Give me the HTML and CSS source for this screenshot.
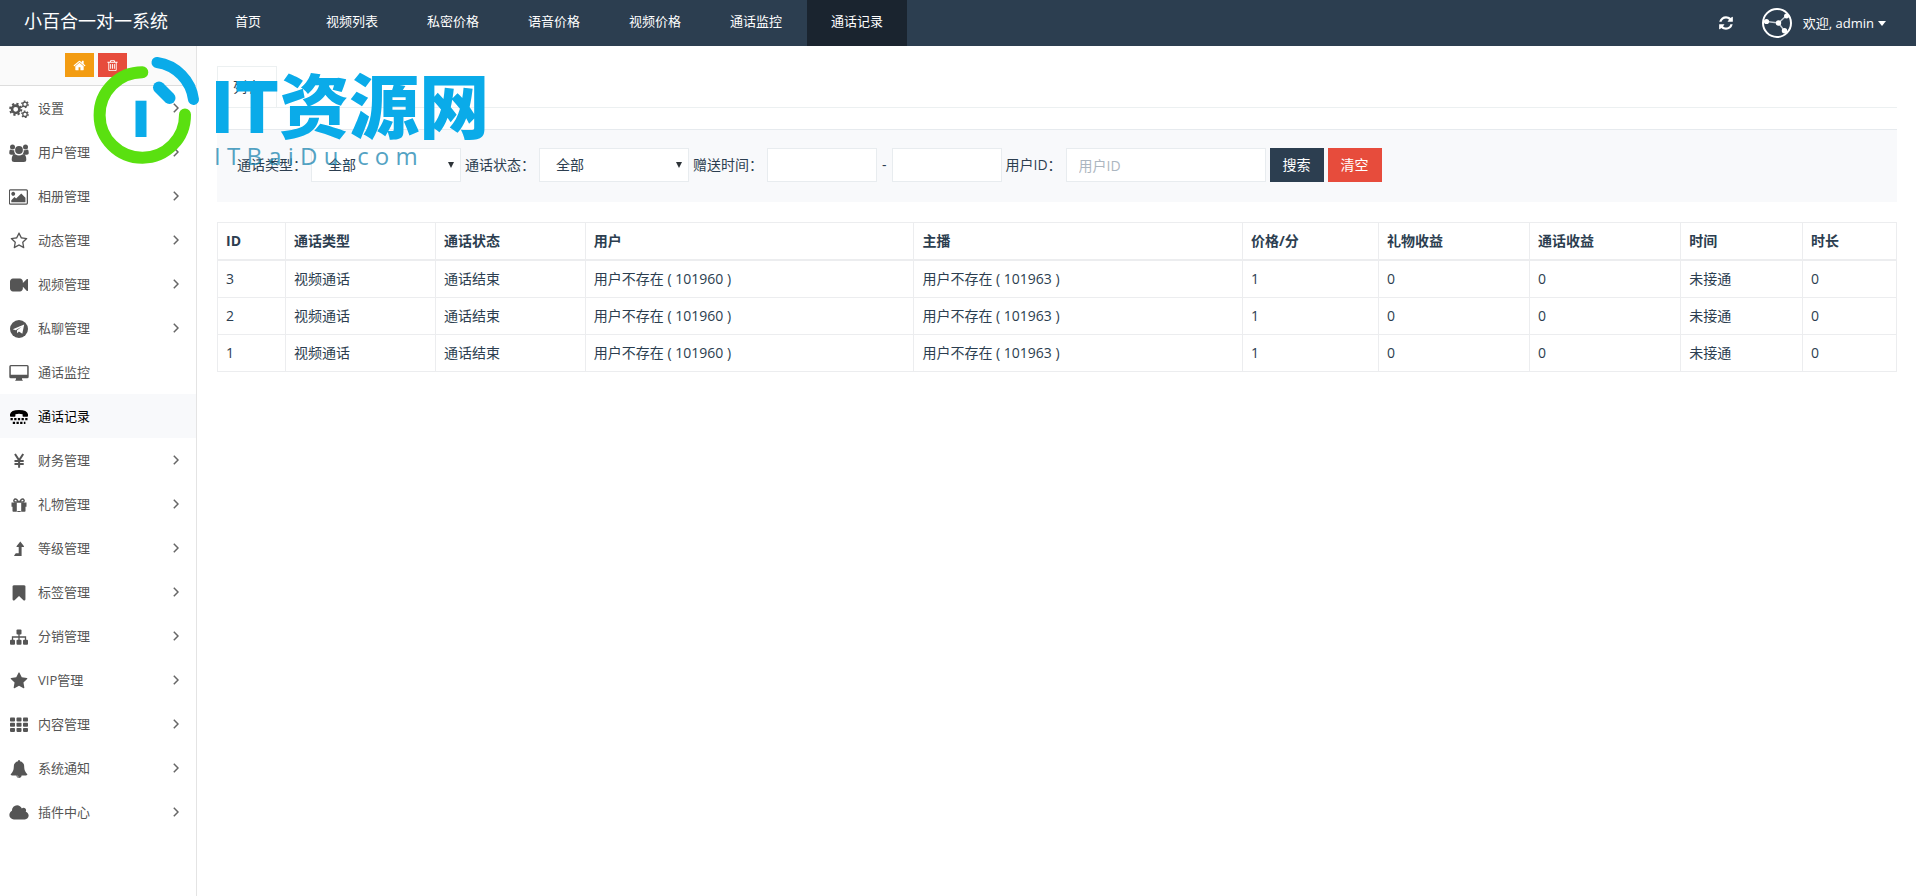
FILE: index.html
```html
<!DOCTYPE html>
<html lang="zh-CN">
<head>
<meta charset="utf-8">
<meta name="viewport" content="width=device-width, initial-scale=1">
<title>小百合一对一系统</title>
<link rel="stylesheet" href="styles.css">
</head>
<body>
<header class="topbar">
  <a class="brand" href="#">小百合一对一系统</a>
  <nav class="tabs">
    <a class="tab tab-home" href="#">首页</a>
    <a class="tab" href="#">视频列表</a>
    <a class="tab" href="#">私密价格</a>
    <a class="tab" href="#">语音价格</a>
    <a class="tab" href="#">视频价格</a>
    <a class="tab" href="#">通话监控</a>
    <a class="tab tab-active" href="#">通话记录</a>
  </nav>
  <div class="account">
    <button class="refresh" type="button" aria-label="刷新">
      <svg width="16" height="16" viewBox="0 0 1792 1792"><path d="M1639 1056q0 5-1 7-64 268-268 434.500t-478 166.500q-146 0-282.500-55t-243.500-157l-129 129q-19 19-45 19t-45-19-19-45v-448q0-26 19-45t45-19h448q26 0 45 19t19 45-19 45l-137 137q71 66 161 102t187 36q134 0 250-65t186-179q11-17 53-117 8-23 30-23h192q13 0 22.500 9.500t9.500 22.500zm25-800v448q0 26-19 45t-45 19h-448q-26 0-45-19t-19-45 19-45l138-138q-148-137-349-137-134 0-250 65t-186 179q-11 17-53 117-8 23-30 23h-199q-13 0-22.500-9.500t-9.500-22.500v-7q65-268 270-434.500t480-166.500q146 0 284 55.500t245 156.500l130-129q19-19 45-19t45 19 19 45z"/></svg>
    </button>
    <a class="user" href="#">
      <svg class="avatar" width="30" height="30" viewBox="0 0 30 30">
        <circle cx="15" cy="15" r="14" fill="none" stroke="#fff" stroke-width="2"/>
        <path d="M4.500 13.500 16.500 15 24.500 7.500M16.500 15l6 8" fill="none" stroke="#c3cbd3" stroke-width="1.500"/>
        <circle cx="4.500" cy="13.500" r="2.600"/><circle cx="16.500" cy="15" r="2.700"/><circle cx="24.500" cy="8" r="2.500"/><circle cx="22.500" cy="22.800" r="2.700"/>
      </svg>
      <span>欢迎, admin</span>
      <svg class="caret" width="8" height="5" viewBox="0 0 8 5"><path d="M0 0h8L4 5z"/></svg>
    </a>
  </div>
</header>

<div class="layout">
  <aside class="sidebar">
    <div class="shortcuts">
      <button class="shortcut shortcut-home" type="button" aria-label="首页">
        <svg width="13" height="13" viewBox="0 0 1792 1792"><path d="M1472 992v480q0 26-19 45t-45 19h-384v-384h-256v384h-384q-26 0-45-19t-19-45v-480q0-1 .5-3t.5-3l575-474 575 474q1 2 1 6zm223-69l-62 74q-8 9-21 11h-3q-13 0-21-7l-692-577-692 577q-12 8-24 7-13-2-21-11l-62-74q-8-10-7-23.500t11-21.500l719-599q32-26 76-26t76 26l244 204v-195q0-14 9-23t23-9h192q14 0 23 9t9 23v408l219 182q10 8 11 21.500t-7 23.500z"/></svg>
      </button>
      <button class="shortcut shortcut-trash" type="button" aria-label="清除缓存">
        <svg width="13" height="13" viewBox="0 0 1792 1792"><path d="M704 736v576q0 14-9 23t-23 9h-64q-14 0-23-9t-9-23v-576q0-14 9-23t23-9h64q14 0 23 9t9 23zm256 0v576q0 14-9 23t-23 9h-64q-14 0-23-9t-9-23v-576q0-14 9-23t23-9h64q14 0 23 9t9 23zm256 0v576q0 14-9 23t-23 9h-64q-14 0-23-9t-9-23v-576q0-14 9-23t23-9h64q14 0 23 9t9 23zm128 724v-948h-896v948q0 22 7 40.500t14.500 27 10.500 8.500h832q3 0 10.500-8.500t14.500-27 7-40.500zm-672-1076h448l-48-117q-7-9-17-11h-317q-10 2-17 11zm928 32v64q0 14-9 23t-23 9h-96v948q0 83-47 143.500t-113 60.500h-832q-66 0-113-58.500t-47-141.500v-952h-96q-14 0-23-9t-9-23v-64q0-14 9-23t23-9h309l70-167q15-37 54-63t79-26h320q40 0 79 26t54 63l70 167h309q14 0 23 9t9 23z"/></svg>
      </button>
    </div>
    <nav class="menu">
      <a class="item" href="#">
        <svg class="icon" viewBox="0 0 20 18"><g fill="none" stroke="currentColor"><circle cx="6.700" cy="9.300" r="3.700" stroke-width="2.600"/><circle cx="6.700" cy="9.300" r="5.600" stroke-width="2" stroke-dasharray="2.200 2.200"/><circle cx="16" cy="4.300" r="2.200" stroke-width="1.300"/><circle cx="16" cy="4.300" r="3.200" stroke-width="1.300" stroke-dasharray="1.670 1.680"/><circle cx="16" cy="14.300" r="2.200" stroke-width="1.300"/><circle cx="16" cy="14.300" r="3.200" stroke-width="1.300" stroke-dasharray="1.670 1.680"/></g></svg>
        <span class="name">设置</span><svg class="arrow" viewBox="0 0 6 10"><path d="M.8.800 5 5 .8 9.200"/></svg></a>
      <a class="item" href="#">
        <svg class="icon" viewBox="0 0 20 18"><circle cx="3.500" cy="3" r="2.500"/><circle cx="16.500" cy="3" r="2.500"/><circle cx="10" cy="6" r="3.900"/><path d="M.3 9.600V8q0-2.400 1.600-2.400 1.500 1 3.300.5-.3 2.100 1 3.800-1 .1-1.800.8H2Q.3 10.700.3 9.600zM19.700 9.600V8q0-2.400-1.600-2.400-1.500 1-3.300.5.300 2.100-1 3.800 1 .1 1.800.8H18q1.700 0 1.700-1.100zM2.700 15.500q0-5.300 3.500-5.300Q10 13 13.800 10.200q3.500 0 3.500 5.300 0 2.500-2.500 2.500H5.200q-2.500 0-2.500-2.500z"/></svg>
        <span class="name">用户管理</span><svg class="arrow" viewBox="0 0 6 10"><path d="M.8.800 5 5 .8 9.200"/></svg></a>
      <a class="item" href="#">
        <svg class="icon" viewBox="-36 0 1991 1792"><path d="M576 576q0 80-56 136t-136 56-136-56-56-136 56-136 136-56 136 56 56 136zm1024 384v448h-1408v-192l320-320 160 160 512-512zm96-704h-1600q-13 0-22.500 9.500t-9.500 22.500v1216q0 13 9.500 22.500t22.500 9.500h1600q13 0 22.500-9.500t9.500-22.500v-1216q0-13-9.500-22.500t-22.500-9.500zm160 32v1216q0 66-47 113t-113 47h-1600q-66 0-113-47t-47-113v-1216q0-66 47-113t113-47h1600q66 0 113 47t47 113z"/></svg>
        <span class="name">相册管理</span><svg class="arrow" viewBox="0 0 6 10"><path d="M.8.800 5 5 .8 9.200"/></svg></a>
      <a class="item" href="#">
        <svg class="icon" viewBox="-100 0 1991 1792"><path d="M1201 1004l306-297-422-62-189-382-189 382-422 62 306 297-73 421 378-199 377 199zm527-357q0 22-26 48l-363 354 86 500q1 7 1 20 0 50-41 50-19 0-40-12l-449-236-449 236q-22 12-40 12-21 0-31.500-14.500t-10.500-35.500q0-6 2-20l86-500-364-354q-25-27-25-48 0-37 56-46l502-73 225-455q19-41 49-41t49 41l225 455 502 73q56 9 56 46z"/></svg>
        <span class="name">动态管理</span><svg class="arrow" viewBox="0 0 6 10"><path d="M.8.800 5 5 .8 9.200"/></svg></a>
      <a class="item" href="#">
        <svg class="icon" viewBox="-100 0 1991 1792"><path d="M1792 352v1088q0 42-39 59-13 5-25 5-27 0-45-19l-403-403v166q0 119-84.500 203.500t-203.500 84.500h-704q-119 0-203.500-84.500t-84.500-203.500v-704q0-119 84.500-203.500t203.500-84.500h704q119 0 203.500 84.500t84.500 203.500v165l403-402q18-19 45-19 12 0 25 5 39 17 39 59z"/></svg>
        <span class="name">视频管理</span><svg class="arrow" viewBox="0 0 6 10"><path d="M.8.800 5 5 .8 9.200"/></svg></a>
      <a class="item" href="#">
        <svg class="icon" viewBox="0 0 20 18"><circle cx="10" cy="9" r="9"/><path d="M3.800 9.300 15.200 4.600 13.300 13.800 9.900 11.400 8.200 13.300 7.900 10.600 12.600 6.700 6.600 10.300z" fill="#fff"/></svg>
        <span class="name">私聊管理</span><svg class="arrow" viewBox="0 0 6 10"><path d="M.8.800 5 5 .8 9.200"/></svg></a>
      <a class="item" href="#">
        <svg class="icon" viewBox="0 0 20 18"><path fill-rule="evenodd" d="M1.800 1h16.400q1.500 0 1.500 1.500v10.200q0 1.500-1.500 1.500H13v1.300q.8.300.8 1.200H6.200q0-.9.800-1.200v-1.300H1.800Q.3 14.200.3 12.700V2.500Q.3 1 1.800 1zm0 1.300v8.400h16.400V2.300z"/></svg>
        <span class="name">通话监控</span></a>
      <a class="item item-active" href="#">
        <svg class="icon" viewBox="0 0 20 18"><path d="M1 8V6.300Q1.800 2 10 2t9 4.300V8q0 .8-.8.800h-3.800q-.8 0-.8-.8V6.300Q10 5.200 6.400 6.300V8q0 .8-.8.800H1.800Q1 8.800 1 8z"/><path d="M1.500 11.100h17M3.800 14.800h12.600" fill="none" stroke="currentColor" stroke-width="2.200" stroke-dasharray="2.300 1.380"/></svg>
        <span class="name">通话记录</span></a>
      <a class="item" href="#">
        <svg class="icon" viewBox="0 0 20 18"><path d="M6 2l4.100 6.400L14.200 2M10.100 8v7.800M5.500 9h9.200M5.500 11.900h9.200" fill="none" stroke="currentColor" stroke-width="2"/></svg>
        <span class="name">财务管理</span><svg class="arrow" viewBox="0 0 6 10"><path d="M.8.800 5 5 .8 9.200"/></svg></a>
      <a class="item" href="#">
        <svg class="icon" viewBox="0 0 20 18"><path d="M2.500 6.500h5.300v9.300H4.300q-.8 0-.8-.8v-4.200h-1zM17.500 6.500h-5.300v9.300h3.500q.8 0 .8-.8v-4.200h1zM8.300 15h3.400v1H8.300z"/><path d="M9.600 6 7.700 3.600Q6.600 2.500 5.600 3.200q-1.500 1.300 0 2.800H9.600zm.8 0 1.900-2.400q1.100-1.100 2.100-.4 1.500 1.300 0 2.800h-4z" fill="none" stroke="currentColor" stroke-width="1.500"/></svg>
        <span class="name">礼物管理</span><svg class="arrow" viewBox="0 0 6 10"><path d="M.8.800 5 5 .8 9.200"/></svg></a>
      <a class="item" href="#">
        <svg class="icon" viewBox="0 0 20 18"><path d="M11.300 1.500 15 6.200q.3.800-.5.800h-1.900v9H5.400l-.3-.4 1.700-2.300h2.900V7H8q-.8 0-.5-.8z"/></svg>
        <span class="name">等级管理</span><svg class="arrow" viewBox="0 0 6 10"><path d="M.8.800 5 5 .8 9.200"/></svg></a>
      <a class="item" href="#">
        <svg class="icon" viewBox="-100 0 1991 1792"><path d="M1420 128q23 0 44 9 33 13 52.500 41t19.500 62v1289q0 34-19.500 62t-52.500 41q-19 8-44 8-48 0-83-32l-441-424-441 424q-36 33-83 33-23 0-44-9-33-13-52.500-41t-19.500-62v-1289q0-34 19.500-62t52.500-41q21-9 44-9h1048z"/></svg>
        <span class="name">标签管理</span><svg class="arrow" viewBox="0 0 6 10"><path d="M.8.800 5 5 .8 9.200"/></svg></a>
      <a class="item" href="#">
        <svg class="icon" viewBox="0 0 20 18"><rect x="7.500" y="1.500" width="5" height="5" rx="1"/><rect x="1" y="11.700" width="5" height="5" rx="1"/><rect x="7.500" y="11.700" width="5" height="5" rx="1"/><rect x="14" y="11.700" width="5" height="5" rx="1"/><path d="M10 6v6M3.500 12V9h13v3" fill="none" stroke="currentColor" stroke-width="1.300"/></svg>
        <span class="name">分销管理</span><svg class="arrow" viewBox="0 0 6 10"><path d="M.8.800 5 5 .8 9.200"/></svg></a>
      <a class="item" href="#">
        <svg class="icon" viewBox="-100 0 1991 1792"><path d="M1728 647q0 22-26 48l-363 354 86 500q1 7 1 20 0 21-10.500 35.500t-30.500 14.500q-19 0-40-12l-449-236-449 236q-22 12-40 12-21 0-31.500-14.500t-10.500-35.500q0-6 2-20l86-500-364-354q-25-27-25-48 0-37 56-46l502-73 225-455q19-41 49-41t49 41l225 455 502 73q56 9 56 46z"/></svg>
        <span class="name">VIP管理</span><svg class="arrow" viewBox="0 0 6 10"><path d="M.8.800 5 5 .8 9.200"/></svg></a>
      <a class="item" href="#">
        <svg class="icon" viewBox="0 0 20 18"><g id="row"><rect x="1" y="1.600" width="5" height="3.900" rx=".8"/><rect x="7.500" y="1.600" width="5" height="3.900" rx=".8"/><rect x="14" y="1.600" width="5" height="3.900" rx=".8"/></g><use href="#row" y="5.200"/><use href="#row" y="10.400"/></svg>
        <span class="name">内容管理</span><svg class="arrow" viewBox="0 0 6 10"><path d="M.8.800 5 5 .8 9.200"/></svg></a>
      <a class="item" href="#">
        <svg class="icon" viewBox="-100 0 1991 1792"><path d="M912 1696q0-16-16-16-59 0-101.500-42.500t-42.500-101.500q0-16-16-16t-16 16q0 73 51.500 124.500t124.500 51.500q16 0 16-16zm816-288q0 52-38 90t-90 38h-448q0 106-75 181t-181 75-181-75-75-181h-448q-52 0-90-38t-38-90q50-42 91-88t85-119.500 74.500-158.500 50-206 19.500-260q0-152 117-282.500t307-158.500q-8-19-8-39 0-40 28-68t68-28 68 28 28 68q0 20-8 39 190 28 307 158.500t117 282.500q0 139 19.500 260t50 206 74.500 158.500 85 119.500 91 88z"/></svg>
        <span class="name">系统通知</span><svg class="arrow" viewBox="0 0 6 10"><path d="M.8.800 5 5 .8 9.200"/></svg></a>
      <a class="item" href="#">
        <svg class="icon" viewBox="28 0 1991 1792"><path d="M1984 1152q0 159-112.500 271.500t-271.500 112.500h-1088q-185 0-316.500-131.500t-131.500-316.500q0-132 71-241.500t187-163.500q-2-28-2-43 0-212 150-362t362-150q158 0 286.500 88t187.500 230q70-62 166-62 106 0 181 75t75 181q0 75-41 138 129 30 213 134.500t84 239.500z"/></svg>
        <span class="name">插件中心</span><svg class="arrow" viewBox="0 0 6 10"><path d="M.8.800 5 5 .8 9.200"/></svg></a>
    </nav>
  </aside>

  <main class="content">
    <div class="pagetabs"><a class="pagetab" href="#">列表</a></div>
    <form class="filter">
      <label for="type">通话类型：</label>
      <span class="pick"><select id="type"><option>全部</option></select></span>
      <label for="state">通话状态：</label>
      <span class="pick"><select id="state"><option>全部</option></select></span>
      <label for="from">赠送时间：</label>
      <input class="field field-date" id="from" type="text">
      <label class="dash" for="to">-</label>
      <input class="field field-date" id="to" type="text">
      <label for="uid">用户ID：</label>
      <input class="field field-uid" id="uid" type="text" placeholder="用户ID">
      <button class="btn btn-search" type="button">搜索</button>
      <button class="btn btn-clear" type="reset">清空</button>
    </form>
    <table class="records">
      <colgroup><col class="c-id"><col class="c-kind"><col class="c-kind"><col class="c-user"><col class="c-user"><col class="c-price"><col class="c-income"><col class="c-income"><col class="c-time"><col></colgroup>
      <thead>
        <tr><th>ID</th><th>通话类型</th><th>通话状态</th><th>用户</th><th>主播</th><th>价格/分</th><th>礼物收益</th><th>通话收益</th><th>时间</th><th>时长</th></tr>
      </thead>
      <tbody>
        <tr><td>3</td><td>视频通话</td><td>通话结束</td><td>用户不存在 ( 101960 )</td><td>用户不存在 ( 101963 )</td><td>1</td><td>0</td><td>0</td><td>未接通</td><td>0</td></tr>
        <tr><td>2</td><td>视频通话</td><td>通话结束</td><td>用户不存在 ( 101960 )</td><td>用户不存在 ( 101963 )</td><td>1</td><td>0</td><td>0</td><td>未接通</td><td>0</td></tr>
        <tr><td>1</td><td>视频通话</td><td>通话结束</td><td>用户不存在 ( 101960 )</td><td>用户不存在 ( 101963 )</td><td>1</td><td>0</td><td>0</td><td>未接通</td><td>0</td></tr>
      </tbody>
    </table>
  </main>
</div>

<div class="watermark">
  <svg width="110" height="112" viewBox="0 0 110 112">
    <g fill="none" stroke-linecap="round" stroke-width="12">
      <path d="M52.300 18.300A42.700 42.700 0 1 0 95 60.500" stroke="#5ae010"/>
      <path d="M67 8.500A43 43 0 0 1 103.500 45.500" stroke="#0aabe9" stroke-width="11"/>
      <path d="M69 33.500 79.500 44" stroke="#0aabe9"/>
    </g>
    <rect x="45.500" y="46.700" width="11" height="36.300" fill="#0aabe9"/>
  </svg>
  <div class="mark">
    <div class="mark-name">IT资源网</div>
    <div class="mark-site">I T B a i D u . c o m</div>
  </div>
</div>
</body>
</html>
```
FILE: styles.css
```css
* { box-sizing: border-box; }

body {
  margin: 0;
  background: #fff;
  color: #2c3e50;
  font: 14px/20px "Open Sans", "Noto Sans CJK SC", sans-serif;
}

a { color: inherit; text-decoration: none; }
button, input, select { font: inherit; color: inherit; border-radius: 0; }
button { border: 0; padding: 0; cursor: pointer; }
svg { display: block; flex: none; fill: currentColor; }

/* top bar */
.topbar {
  display: flex;
  height: 46px;
  background: #2c3e50;
  color: #fff;
}
.brand {
  width: 211px;
  padding-left: 24px;
  font-size: 18px;
  line-height: 42px;
}
.tabs { display: flex; flex: 1; gap: 1px; font-size: 13px; line-height: 43px; }
.tab { padding: 0 24px; }
.tab-home { margin-right: 16px; }
.tab-active { background: #1a242f; }
.account { display: flex; align-items: center; gap: 28px; padding-right: 30px; font-size: 13px; }
.refresh { background: none; color: #fff; }
.user { display: flex; align-items: center; gap: 11px; }
.caret { margin-left: -7px; }

/* sidebar */
.layout { display: flex; min-height: calc(100vh - 46px); }
.sidebar { flex: none; width: 197px; border-right: 1px solid #e4e4e4; }
.shortcuts {
  display: flex;
  justify-content: center;
  gap: 4px;
  height: 40px;
  padding: 7px 4px 0 0;
  background: #fafafa;
  border-bottom: 1px solid #ddd;
}
.shortcut {
  display: grid;
  place-items: center;
  width: 29px;
  height: 24px;
  color: #fff;
}
.shortcut-home { background: #f39c12; }
.shortcut-trash { background: #e74c3c; }
.item {
  display: flex;
  align-items: center;
  height: 44px;
  padding: 0 17px 0 9px;
  color: #555;
  font-size: 13px;
}
.item-active { background: #f8f9fb; color: #000; }
.icon { width: 20px; height: 18px; margin: 2px 9px 0 0; }
.name { flex: 1; }
.arrow { width: 6px; height: 10px; fill: none; stroke: #666; stroke-width: 1.5; }

/* content */
.content { flex: 1; padding: 20px 19px 20px 20px; }
.pagetabs { display: flex; border-bottom: 1px solid #ecf0f1; }
.pagetab {
  padding: 10px 15px;
  border: 1px solid #ecf0f1;
  border-bottom: 0;
}
.filter {
  display: flex;
  align-items: center;
  gap: 4px;
  height: 73px;
  margin: 21px 0 20px;
  padding: 0 20px 2px;
  background: #f8f9fb;
  border-top: 1px solid #e6eaee;
}
.pick { display: flex; align-items: center; position: relative; }
.pick select {
  width: 150px;
  height: 34px;
  padding: 0 16px;
  appearance: none;
  background: #fff;
  border: 1px solid #e8ecef;
}
.pick::after {
  content: "";
  position: absolute;
  right: 7px;
  border: 3px solid transparent;
  border-top: 6px solid #2d3338;
  border-bottom: 0;
}
.field { height: 34px; padding: 0 12px; background: #fff; border: 1px solid #e8ecef; }
.field::placeholder { color: #acb6c0; opacity: 1; }
.field-date { width: 110px; }
.field-uid { width: 200px; }
.dash { padding: 0 1px; }
.btn { width: 54px; height: 34px; color: #fff; }
.btn-search { background: #2c3e50; }
.btn-clear { background: #e74c3c; }

.records { width: 100%; table-layout: fixed; border-collapse: collapse; }
.records th, .records td { padding: 8px; border: 1px solid #ecedef; text-align: left; }
.records th { border-bottom-width: 2px; font-weight: 700; }
.c-id { width: 4.05%; }
.c-kind { width: 8.93%; }
.c-user { width: 19.57%; }
.c-price { width: 8.1%; }
.c-income { width: 9%; }
.c-time { width: 7.25%; }

/* watermark over the page */
.watermark {
  position: absolute;
  top: 54px;
  left: 90px;
  display: flex;
  gap: 10px;
  pointer-events: none;
}
.mark { padding-top: 14px; white-space: nowrap; }
.mark-name {
  color: #0aabe9;
  font: 900 70px/70px "Noto Sans CJK SC", sans-serif;
}
.mark-site { padding-left: 4px; color: #1a85b0; font-size: 24px; line-height: 36px; opacity: .75; }
```
